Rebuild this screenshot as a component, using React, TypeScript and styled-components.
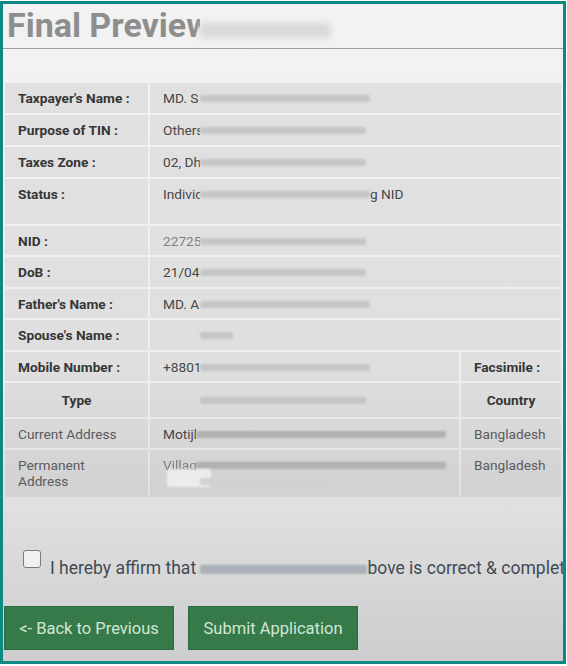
import styled, { createGlobalStyle } from 'styled-components';

const GlobalStyle = createGlobalStyle`
  html, body {
    margin: 0;
    padding: 0;
    background: #ffffff;
  }
  body {
    font-family: Roboto, 'Liberation Sans', Arial, sans-serif;
  }
  * {
    box-sizing: border-box;
  }
`;

type Detail = {
  label: string;
  text: string;
  bar: number;
  h: number;
  tail?: string;
  faded?: boolean;
};

const details: Detail[] = [
  { label: "Taxpayer's Name :", text: 'MD. S', bar: 170, h: 30 },
  { label: 'Purpose of TIN :', text: 'Others', bar: 166, h: 30 },
  { label: 'Taxes Zone :', text: '02, Dhaka', bar: 166, h: 30 },
  { label: 'Status :', text: 'Individual', bar: 170, h: 45, tail: 'g NID' },
  { label: 'NID :', text: '22725', bar: 166, h: 29, faded: true },
  { label: 'DoB :', text: '21/04', bar: 166, h: 30 },
  { label: "Father's Name :", text: 'MD. A', bar: 170, h: 29 },
  { label: "Spouse's Name :", text: '', bar: 33, h: 30 },
];

const App = () => {
  return (
    <>
      <GlobalStyle />
      <Frame>
        <Header>
          <TitleClip>Final Preview</TitleClip>
          <TitleBlur />
        </Header>

        <Table>
          <colgroup>
            <col style={{ width: 143 }} />
            <col style={{ width: 309 }} />
            <col />
          </colgroup>
          <tbody>
            {details.map((d) => (
              <Row key={d.label} $h={d.h}>
                <Cell $bold>{d.label}</Cell>
                <Cell colSpan={2}>
                  <Value>
                    <Clip $faded={d.faded}>{d.text}</Clip>
                    <Blur $w={d.bar} />
                    {d.tail && <span>{d.tail}</span>}
                  </Value>
                </Cell>
              </Row>
            ))}
            <Row $h={29}>
              <Cell $bold>Mobile Number :</Cell>
              <Cell>
                <Value>
                  <Clip>+8801</Clip>
                  <Blur $w={170} />
                </Value>
              </Cell>
              <Cell $bold>Facsimile :</Cell>
            </Row>
            <Row $h={34}>
              <Cell $bold $center $pad={9}>
                Type
              </Cell>
              <Cell $pad={9}>
                <Value>
                  <Clip />
                  <Blur $w={166} />
                </Value>
              </Cell>
              <Cell $bold $center $pad={9}>
                Country
              </Cell>
            </Row>
            <Row $h={29}>
              <Cell $muted>Current Address</Cell>
              <Cell>
                <Value>
                  <Clip>Motijheel</Clip>
                  <Blur $w={250} $dark />
                </Value>
              </Cell>
              <Cell $muted>Bangladesh</Cell>
            </Row>
            <Row $h={47}>
              <Cell $muted>
                Permanent
                <br />
                Address
              </Cell>
              <Cell>
                <Value>
                  <Clip $faded>Village</Clip>
                  <Blur $w={250} $dark />
                </Value>
                <Value>
                  <Chip />
                  <Blur $w={130} $light />
                </Value>
              </Cell>
              <Cell $muted>Bangladesh</Cell>
            </Row>
          </tbody>
        </Table>

        <Agree>
          <Check type='checkbox' />
          <AgreeText>
            I hereby affirm that <Blur $w={167} $slate />
            bove is correct &amp; complete
          </AgreeText>
        </Agree>

        <Actions>
          <Button>&lt;- Back to Previous</Button>
          <Button>Submit Application</Button>
        </Actions>
      </Frame>
    </>
  );
};

const Frame = styled.div`
  width: 566px;
  height: 663px;
  margin-top: 1px;
  border: 3px solid #0f8783;
  background: linear-gradient(
    to bottom,
    #f2f2f2 0%,
    #efefef 55%,
    #e0e0e0 76%,
    #cdcdcd 100%
  );
  overflow: hidden;
  display: flex;
  flex-direction: column;
`;

const Header = styled.div`
  display: flex;
  align-items: flex-start;
  height: 45px;
  padding-left: 4px;
  border-bottom: 1px solid #9c9c9c;
`;

const TitleClip = styled.h1`
  margin: 0;
  width: 193px;
  overflow: hidden;
  white-space: nowrap;
  font-size: 34px;
  line-height: 42px;
  font-weight: 700;
  color: #8e8e8e;
`;

const TitleBlur = styled.span`
  width: 131px;
  height: 15px;
  margin-top: 19px;
  background: #d9d9d9;
  filter: blur(3px);
`;

const Table = styled.table`
  margin-top: 32px;
  width: 560px;
  table-layout: fixed;
  border-collapse: separate;
  border-spacing: 2px;
  font-size: 13.7px;
  line-height: 16px;
`;

const Row = styled.tr<{ $h: number }>`
  height: ${(p) => p.$h}px;
`;

const Cell = styled.td<{
  $bold?: boolean;
  $center?: boolean;
  $muted?: boolean;
  $pad?: number;
}>`
  background: rgba(0, 0, 0, 0.065);
  vertical-align: top;
  padding: ${(p) => p.$pad ?? 7}px 13px 0;
  white-space: nowrap;
  overflow: hidden;
  font-weight: ${(p) => (p.$bold ? 700 : 400)};
  text-align: ${(p) => (p.$center ? 'center' : 'left')};
  color: ${(p) => (p.$bold ? '#363636' : p.$muted ? '#5a5a5a' : '#474747')};
`;

const Value = styled.div`
  display: flex;
  align-items: center;
  height: 16px;
`;

const Clip = styled.span<{ $faded?: boolean }>`
  display: inline-block;
  width: 37px;
  overflow: hidden;
  white-space: nowrap;
  color: ${(p) => (p.$faded ? '#7e7e7e' : 'inherit')};
  filter: ${(p) => (p.$faded ? 'blur(0.3px)' : 'none')};
`;

const Blur = styled.span<{
  $w: number;
  $dark?: boolean;
  $light?: boolean;
  $slate?: boolean;
}>`
  display: inline-block;
  flex: none;
  width: ${(p) => p.$w}px;
  height: ${(p) => (p.$slate ? 9 : 7)}px;
  vertical-align: middle;
  border-radius: 2px;
  background: ${(p) =>
    p.$slate
      ? 'repeating-linear-gradient(to bottom, #a3aab2 0 2px, #b8bec4 2px 3px)'
      : p.$dark
      ? 'repeating-linear-gradient(to bottom, #ababab 0 2px, #bdbdbd 2px 3px)'
      : p.$light
      ? '#d2d2d2'
      : '#c6c6c6'};
  filter: blur(1.2px);
`;

const Chip = styled.span`
  display: inline-block;
  flex: none;
  width: 44px;
  height: 18px;
  margin-top: -6px;
  margin-left: 4px;
  margin-right: -11px;
  border-radius: 3px;
  background: #ececec;
  filter: blur(0.8px);
`;

const Agree = styled.div`
  display: flex;
  align-items: flex-start;
  gap: 9px;
  margin-top: 51px;
  padding-left: 20px;
  white-space: nowrap;
`;

const Check = styled.input`
  appearance: none;
  flex: none;
  width: 18px;
  height: 18px;
  margin: 0;
  border: 1.5px solid #7b7b7b;
  border-radius: 3px;
  background: #f1f1f1;
`;

const AgreeText = styled.label`
  margin-top: 8px;
  font-size: 17.5px;
  line-height: 21px;
  color: #3f4a56;
`;

const Actions = styled.div`
  display: flex;
  gap: 14px;
  margin-top: 27px;
  padding-left: 1px;
`;

const Button = styled.button`
  width: 170px;
  height: 44px;
  padding: 0;
  border: 1px solid #2d6a3d;
  background: #377a4a;
  color: #d2e6d4;
  font-family: Roboto, 'Liberation Sans', Arial, sans-serif;
  font-size: 16.5px;
  text-align: center;
  cursor: pointer;
`;

export default App;
